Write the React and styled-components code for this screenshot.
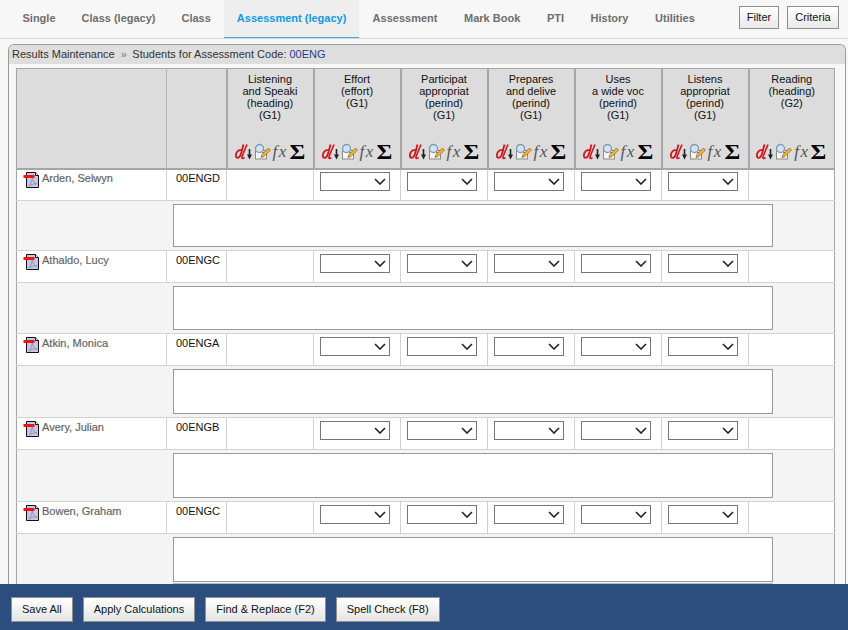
import React from 'react';
import styled, { createGlobalStyle } from 'styled-components';

const GlobalStyle = createGlobalStyle`
  html, body, #root {
    margin: 0;
    height: 100%;
    overflow: hidden;
  }
  body {
    font-family: "Liberation Sans", Arial, sans-serif;
    font-size: 11px;
    background: #f7f7f7;
  }
`;

const Page = styled.div`
  display: flex;
  flex-direction: column;
  height: 100%;
`;

const TabBar = styled.nav`
  flex: none;
  display: flex;
  justify-content: space-between;
  height: 38px;
  padding-left: 9.5px;
  background: #f7f7f7;
  border-bottom: 1px solid #d6d6d6;
`;

const Tabs = styled.div`
  display: flex;
`;

const Tab = styled.a`
  display: flex;
  align-items: center;
  height: 38px;
  padding: 0 13px 2px;
  box-sizing: border-box;
  font-size: 11px;
  font-weight: bold;
  color: ${(p) => (p.$active ? '#0f9be8' : '#6e6e6e')};
  background: ${(p) => (p.$active ? '#eeeeee' : 'transparent')};
  border-bottom: ${(p) => (p.$active ? '1px solid #4aa8e0' : 'none')};
  &:nth-child(n + 5) {
    padding: 0 13.3px 2px;
  }
`;

const TabActions = styled.div`
  display: flex;
  align-items: flex-start;
  gap: 8px;
  padding: 6px 9px 0 0;
`;

const SmallButton = styled.button`
  width: ${(p) => p.$width}px;
  height: 23px;
  padding: 0 0 2px;
  border: 1px solid #8e8e8e;
  background: linear-gradient(#ffffff, #e9e9e9);
  font: 11px "Liberation Sans", Arial, sans-serif;
  color: #111;
`;

const Main = styled.main`
  flex: 1;
  min-height: 0;
  overflow: hidden;
  padding: 5px 2px 0 8px;
`;

const Panel = styled.section`
  border: 1px solid #9a9a9a;
  border-bottom: none;
  border-radius: 6px 6px 0 0;
  background: #f7f7f7;
  padding-bottom: 40px;
`;

const Crumbs = styled.div`
  height: 19px;
  line-height: 19px;
  padding-left: 3px;
  background: #dedede;
  border-radius: 5px 5px 0 0;
  color: #333;
  font-size: 11px;
`;

const CrumbSep = styled.span`
  color: #777;
  margin: 0 5.5px 0 6px;
`;

const Code = styled.span`
  color: #1f3c8f;
`;

const Grid = styled.table`
  table-layout: fixed;
  border-collapse: collapse;
  width: 818px;
  margin: 4px 0 0 7px;
  border-left: 1px solid #a6a6a6;
  border-right: 1px solid #a6a6a6;
  border-top: 1px solid #a6a6a6;
  background: #fff;
`;

const HeadCell = styled.th`
  height: 100px;
  padding: 4px 0 0;
  box-sizing: border-box;
  vertical-align: top;
  background: #dcdcdc;
  border-left: 2px solid #a6a6a6;
  border-bottom: 2px solid #a6a6a6;
  font-size: 11px;
  font-weight: normal;
  line-height: 12px;
  color: #111;
  text-align: center;
  &:first-child {
    border-left: none;
  }
`;

const BlankHead = styled(HeadCell)`
  border-left: 1px solid #b4b4b4;
  &:first-child {
    border-left: none;
  }
`;

const HeadLabel = styled.div`
  height: 70px;
  overflow: hidden;
`;

const IconRow = styled.div`
  display: flex;
  align-items: center;
  justify-content: center;
  height: 18px;
  padding-right: 1px;
`;

const Fx = styled.span`
  font: italic 17px "Liberation Serif", serif;
  line-height: 18px;
  letter-spacing: 1.5px;
  color: #555;
  width: 19px;
  padding-left: 2px;
  box-sizing: border-box;
  text-align: left;
`;

const Sigma = styled.span`
  display: inline-block;
  font: bold 21px "Liberation Serif", serif;
  line-height: 18px;
  color: #000;
  width: 15px;
  transform: scaleX(1.15);
`;

const StudentRow = styled.tr`
  --cell-top: ${(p) => (p.$first ? 2 : 3)}px;
`;

const Cell = styled.td`
  height: 32px;
  padding: 0;
  box-sizing: border-box;
  border-left: 1px solid #d2d2d2;
  border-bottom: 1px solid #d2d2d2;
  vertical-align: top;
  &:first-child {
    border-left: none;
  }
`;

const NameCell = styled(Cell)`
  padding: var(--cell-top) 0 0 6px;
`;

const NameWrap = styled.div`
  display: flex;
  align-items: flex-start;
  gap: 2px;
  font-size: 11px;
  line-height: 13px;
  color: #666;
  -webkit-text-stroke: 0.2px #666;
`;

const ClassCode = styled.div`
  padding: var(--cell-top) 0 0 9px;
  font-size: 11px;
  line-height: 13px;
  color: #111;
`;

const chevron = encodeURIComponent(
  '<svg xmlns="http://www.w3.org/2000/svg" width="12" height="7"><path d="M1 1l5 5 5-5" fill="none" stroke="#222" stroke-width="1.6"/></svg>'
);

const Choice = styled.select`
  display: block;
  width: 70px;
  height: 19px;
  margin: var(--cell-top) 0 0 6px;
  appearance: none;
  border: 1px solid #767676;
  border-radius: 0;
  background: #fff url("data:image/svg+xml,${chevron}") no-repeat right 3px center;
  font: 11px "Liberation Sans", Arial, sans-serif;
`;

const CommentCell = styled.td`
  padding: 3px 0 3px 156px;
  background: #f4f4f4;
  border-bottom: 1px solid #d2d2d2;
`;

const Comment = styled.textarea`
  display: block;
  width: 600px;
  height: ${(p) => p.$height}px;
  box-sizing: border-box;
  margin: 0;
  padding: 2px;
  resize: none;
  background: #fff;
  border: 1px solid #999;
  border-radius: 0;
`;

const NextComment = styled.div`
  width: 600px;
  height: 12px;
  box-sizing: border-box;
  margin-top: 1px;
  background: #fff;
  border: 1px solid #bbb;
`;

const Footer = styled.footer`
  flex: none;
  display: flex;
  align-items: flex-start;
  gap: 10px;
  height: 46px;
  margin-top: -1px;
  padding: 13px 11px 0;
  box-sizing: border-box;
  background: #2c4e7e;
  position: relative;
`;

const FooterButton = styled.button`
  height: 25px;
  padding: 0 10px 1px;
  border: 1px solid #8f8f8f;
  background: linear-gradient(#ffffff, #e4e4e4);
  font: 11px "Liberation Sans", Arial, sans-serif;
  color: #111;
`;

const SortIcon = () => (
  <svg width="18" height="18" viewBox="0 0 18 18">
    <path d="M7 7.500C3.500 6 1 9 .9 12.500c-.1 3 2.600 3 4 .8C6.400 11 7 6.500 8.500 1.500" fill="none" stroke="#d4141c" strokeWidth="1.800" />
    <path d="M12 1.500C10.500 5 8 11 7 14c-.5 1.800 1 2 2.500.5" fill="none" stroke="#d4141c" strokeWidth="1.600" />
    <path d="M14.500 6v7" stroke="#222" strokeWidth="1.600" />
    <path d="M12 11.500h5L14.500 16.500z" fill="#222" />
  </svg>
);

const NoteIcon = () => (
  <svg width="18" height="18" viewBox="0 0 18 18">
    <rect x="2.500" y="7.500" width="11" height="8.500" fill="#f6f6f6" stroke="#8a8a8a" />
    <circle cx="6.500" cy="5.500" r="4" fill="#d5e3f1" stroke="#7f9ab2" strokeWidth="1.300" />
    <path d="M9.500 9l2 2" stroke="#7a6a4a" strokeWidth="1.500" />
    <path d="M8 14.500l1-3 6.500-6.500 2 2-6.500 6.500z" fill="#f0b73c" stroke="#8a5a1a" strokeWidth=".7" />
  </svg>
);

const PdfIcon = () => (
  <svg width="17" height="17" viewBox="0 0 17 17" style={{ flex: 'none' }}>
    <path d="M3.500 .5h9l3 3v12h-12z" fill="#c5c5f2" stroke="#111" />
    <path d="M12.500 .5v3h3" fill="#fff" stroke="#111" />
    <path d="M6 14c2-2 3-6 3.200-8 .6 3.500 2 5.500 5 6-3-.4-6 .4-8 2z" fill="none" stroke="#9a9a8a" />
    <rect x=".5" y="3" width="11" height="3" fill="#e8170f" />
  </svg>
);

const columns = [
  ['Listening', 'and Speaki', '(heading)', '(G1)'],
  ['Effort', '(effort)', '(G1)'],
  ['Participat', 'appropriat', '(perind)', '(G1)'],
  ['Prepares', 'and delive', '(perind)', '(G1)'],
  ['Uses', 'a wide voc', '(perind)', '(G1)'],
  ['Listens', 'appropriat', '(perind)', '(G1)'],
  ['Reading', '(heading)', '(G2)'],
];

const students = [
  { name: 'Arden, Selwyn', code: '00ENGD', box: 43 },
  { name: 'Athaldo, Lucy', code: '00ENGC', box: 44 },
  { name: 'Atkin, Monica', code: '00ENGA', box: 45 },
  { name: 'Avery, Julian', code: '00ENGB', box: 45 },
  { name: 'Bowen, Graham', code: '00ENGC', box: 45 },
];

const App = () => {
  const tabs = ['Single', 'Class (legacy)', 'Class', 'Assessment (legacy)', 'Assessment', 'Mark Book', 'PTI', 'History', 'Utilities'];

  return (
    <Page>
      <GlobalStyle />
      <TabBar>
        <Tabs>
          {tabs.map((tab) => (
            <Tab key={tab} $active={tab === 'Assessment (legacy)'}>{tab}</Tab>
          ))}
        </Tabs>
        <TabActions>
          <SmallButton $width={40}>Filter</SmallButton>
          <SmallButton $width={52}>Criteria</SmallButton>
        </TabActions>
      </TabBar>

      <Main>
        <Panel>
          <Crumbs>
            Results Maintenance<CrumbSep>»</CrumbSep>Students for Assessment Code: <Code>00ENG</Code>
          </Crumbs>
          <Grid>
            <colgroup>
              <col style={{ width: 150 }} />
              <col style={{ width: 60 }} />
              <col span="6" style={{ width: 87 }} />
              <col style={{ width: 86 }} />
            </colgroup>
            <thead>
              <tr>
                <BlankHead />
                <BlankHead />
                {columns.map((lines, i) => (
                  <HeadCell key={i}>
                    <HeadLabel>
                      {lines.map((line) => <div key={line}>{line}</div>)}
                    </HeadLabel>
                    <IconRow>
                      <SortIcon />
                      <NoteIcon />
                      <Fx>fx</Fx>
                      <Sigma>Σ</Sigma>
                    </IconRow>
                  </HeadCell>
                ))}
              </tr>
            </thead>
            <tbody>
              {students.map(({ name, code, box }, idx) => (
                <React.Fragment key={name}>
                  <StudentRow $first={idx === 0}>
                    <NameCell>
                      <NameWrap><PdfIcon />{name}</NameWrap>
                    </NameCell>
                    <Cell><ClassCode>{code}</ClassCode></Cell>
                    <Cell />
                    {[0, 1, 2, 3, 4].map((n) => (
                      <Cell key={n}><Choice aria-label={columns[n + 1][0]} /></Cell>
                    ))}
                    <Cell />
                  </StudentRow>
                  <tr>
                    <CommentCell colSpan={9}>
                      <Comment $height={box} />
                      {idx === students.length - 1 && <NextComment />}
                    </CommentCell>
                  </tr>
                </React.Fragment>
              ))}
            </tbody>
          </Grid>
        </Panel>
      </Main>

      <Footer>
        <FooterButton>Save All</FooterButton>
        <FooterButton>Apply Calculations</FooterButton>
        <FooterButton>Find &amp; Replace (F2)</FooterButton>
        <FooterButton>Spell Check (F8)</FooterButton>
      </Footer>
    </Page>
  );
};

export default App;
